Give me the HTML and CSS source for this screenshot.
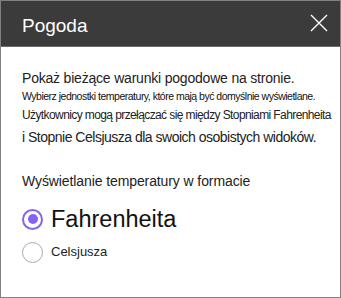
FILE: index.html
```html
<!DOCTYPE html>
<html lang="pl">
<head>
<meta charset="utf-8">
<link rel="stylesheet" href="styles.css">
</head>
<body>
<div class="panel">
  <div class="header">
    <div class="title">Pogoda</div>
    <button class="close" aria-label="Zamknij">
      <svg width="18" height="18" viewBox="0 0 18 18"><path d="M1 1L17 17M17 1L1 17" stroke="#ffffff" stroke-width="1.4" fill="none"/></svg>
    </button>
  </div>
  <div class="body">
    <p class="l1">Pokaż bieżące warunki pogodowe na stronie.</p>
    <p class="l2">Wybierz jednostki temperatury, które mają być domyślnie wyświetlane.</p>
    <p class="l3">Użytkownicy mogą przełączać się między Stopniami Fahrenheita</p>
    <p class="l4">i Stopnie Celsjusza dla swoich osobistych widoków.</p>
    <div class="label">Wyświetlanie temperatury w formacie</div>
    <div class="option big"><span class="radio checked"></span><span>Fahrenheita</span></div>
    <div class="option small"><span class="radio"></span><span>Celsjusza</span></div>
  </div>
</div>
</body>
</html>
```

FILE: styles.css
```css
html, body { margin: 0; padding: 0; background: #fff; }
body { font-family: "Liberation Sans", "Noto Sans", sans-serif; color: #222; }
.panel {
  width: 341px; height: 298px; box-sizing: border-box;
  border: 1px solid #808080; background: #fff;
  display: flex; flex-direction: column;
}
.header {
  height: 46px; background: #3b3b3b; border-bottom: 1px solid #6a6a6a;
  display: flex; align-items: center; justify-content: space-between;
  padding: 0 12px 0 21px; box-sizing: border-box; flex: none;
}
.title { color: #fff; font-size: 19px; line-height: 1; padding-top: 4px; }
.close { background: none; border: 0; padding: 0; width: 18px; height: 18px; display: flex; margin-bottom: 2px; }
.body { padding: 21px 10px 0 21px; }
p { margin: 0; white-space: nowrap; }
.l1 { font-size: 14px; line-height: 20px; letter-spacing: -0.2px; color: #222; }
.l2 { font-size: 10.5px; line-height: 16px; letter-spacing: -0.5px; color: #111; }
.l3 { font-size: 12px; line-height: 22px; letter-spacing: -0.6px; color: #222; }
.l4 { font-size: 14px; line-height: 22px; letter-spacing: -0.5px; color: #222; }
.label { margin-top: 24px; font-size: 14px; line-height: 18px; letter-spacing: -0.1px; color: #222; }
.option { display: flex; align-items: center; gap: 8px; }
.option.big { margin-top: 14px; font-size: 23.5px; line-height: 30px; color: #111; }
.option.small { margin-top: 5px; font-size: 13px; line-height: 26px; color: #222; }
.radio {
  width: 21px; height: 21px; border-radius: 50%; border: 1.5px solid #a8a8a8;
  box-sizing: border-box; flex: none; position: relative;
}
.radio.checked { border: 2px solid #8662f2; }
.radio.checked::after {
  content: ""; position: absolute; left: 3.5px; top: 3.5px; width: 10px; height: 10px;
  border-radius: 50%; background: #8662f2;
}
```
